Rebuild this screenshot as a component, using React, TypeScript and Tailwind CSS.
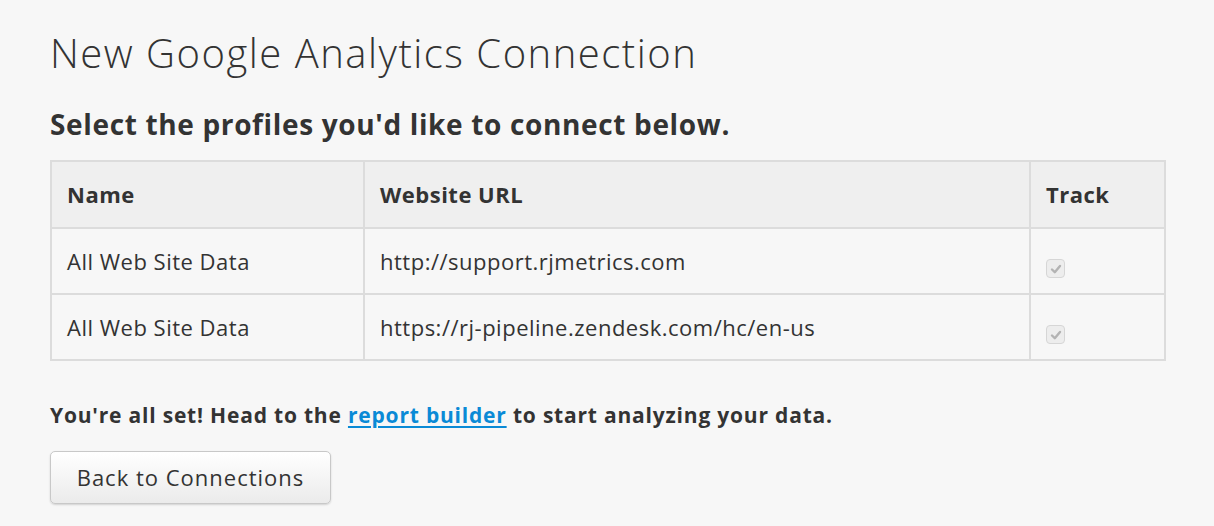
import React from 'react';

interface Profile {
  name: string;
  url: string;
}

const PROFILES: Profile[] = [
  { name: 'All Web Site Data', url: 'http://support.rjmetrics.com' },
  { name: 'All Web Site Data', url: 'https://rj-pipeline.zendesk.com/hc/en-us' },
];

const DisabledCheck: React.FC = () => (
  <span className="inline-flex w-[19px] h-[19px] items-center justify-center rounded-[4px] border border-[#d6d6d6] bg-[#ededed]">
    <svg viewBox="0 0 12 12" className="w-[12px] h-[12px]">
      <path d="M2 6.5 L4.8 9.2 L10 3" fill="none" stroke="#b3b3b3" strokeWidth="2.4" strokeLinecap="round" strokeLinejoin="round" />
    </svg>
  </span>
);

const App: React.FC = () => {
  const cell = "border-2 border-[#dcdcdc] px-[15px] text-left align-middle";

  return (
    <div className="min-h-[526px] w-full bg-[#f7f7f7] text-[#333] font-['Open_Sans',sans-serif] pl-[50px] pr-[48px] pt-[26px]">
      <h1 className="text-[40px] font-light leading-[54px] tracking-[1.5px]">New Google Analytics Connection</h1>

      <h2 className="mt-[27px] text-[28px] font-bold leading-[34px] tracking-[0.65px]">Select the profiles you'd like to connect below.</h2>

      {/* Profiles */}
      <table className="mt-[19px] w-full border-collapse text-[22px] tracking-[0.5px]">
        <thead>
          <tr className="bg-[#efefef] h-[67px]">
            <th className={`${cell} w-[313px] font-bold`}>Name</th>
            <th className={`${cell} font-bold`}>Website URL</th>
            <th className={`${cell} w-[135px] font-bold`}>Track</th>
          </tr>
        </thead>
        <tbody>
          {PROFILES.map((p, i) => (
            <tr key={i} className="h-[66px]">
              <td className={cell}>{p.name}</td>
              <td className={cell}>{p.url}</td>
              <td className={`${cell} pt-[10px]`}>
                <DisabledCheck />
              </td>
            </tr>
          ))}
        </tbody>
      </table>

      <p className="mt-[40px] text-[21px] font-bold leading-[28px] tracking-[0.8px]">
        You're all set! Head to the{' '}
        <a href="#" className="text-[#0a8ad6] underline underline-offset-[3px] decoration-2">report builder</a>{' '}
        to start analyzing your data.
      </p>

      <button className="mt-[22px] h-[53px] w-[281px] rounded-[5px] border border-[#c8c8c8] bg-gradient-to-b from-white to-[#ebebeb] text-[22px] tracking-[1px] text-[#333] shadow-[0_1px_2px_rgba(0,0,0,0.15)]">
        Back to Connections
      </button>
    </div>
  );
};

export default App;
